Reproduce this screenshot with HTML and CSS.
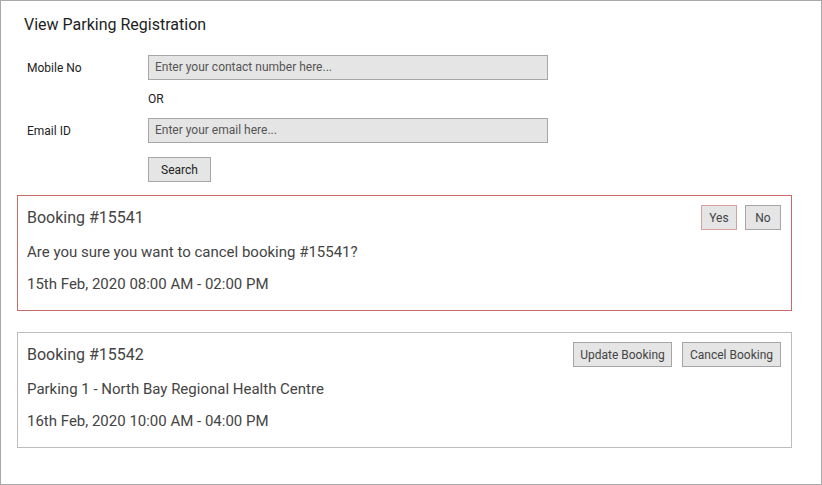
FILE: index.html
```html
<!DOCTYPE html>
<html>
<head>
<meta charset="utf-8">
<link rel="stylesheet" href="styles.css">
</head>
<body>
<div class="frame">
  <h1 class="title">View Parking Registration</h1>
  <div class="form">
    <label class="label">Mobile No</label>
    <div class="input">Enter your contact number here...</div>
    <span></span>
    <div class="or">OR</div>
    <label class="label">Email ID</label>
    <div class="input">Enter your email here...</div>
    <span></span>
    <div><button class="btn search">Search</button></div>
  </div>
  <div class="card card-alert">
    <div class="card-head">
      <div class="card-title">Booking #15541</div>
      <div class="actions actions-confirm">
        <button class="btn btn-sm btn-yes">Yes</button>
        <button class="btn btn-sm">No</button>
      </div>
    </div>
    <div class="line">Are you sure you want to cancel booking #15541?</div>
    <div class="line">15th Feb, 2020 08:00 AM - 02:00 PM</div>
  </div>
  <div class="card">
    <div class="card-head">
      <div class="card-title">Booking #15542</div>
      <div class="actions">
        <button class="btn btn-lg">Update Booking</button>
        <button class="btn btn-lg">Cancel Booking</button>
      </div>
    </div>
    <div class="line">Parking 1 - North Bay Regional Health Centre</div>
    <div class="line">16th Feb, 2020 10:00 AM - 04:00 PM</div>
  </div>
</div>
</body>
</html>
```
FILE: styles.css
```css
* { box-sizing: border-box; }
html, body { margin: 0; padding: 0; background: #fff; }
body { font-family: Roboto, "Noto Sans", sans-serif; color: #222; }
.frame {
  width: 822px;
  height: 485px;
  border: 1px solid #a9a9a9;
  padding: 0 29px 0 16px;
}
.title {
  margin: 0;
  padding: 14px 0 0 7px;
  font-size: 16px;
  font-weight: 400;
  line-height: 20px;
  color: #1e1e1e;
}
.form {
  display: grid;
  grid-template-columns: 121px 400px;
  align-items: center;
  row-gap: 8px;
  padding: 20px 0 0 10px;
  font-size: 12px;
}
.label { color: #222; }
.input {
  height: 25px;
  line-height: 23px;
  border: 1px solid #a6a6a6;
  background: #e5e5e5;
  padding: 0 6px;
  color: #555;
  font-size: 12px;
}
.or { line-height: 22px; color: #222; }
.btn {
  font-family: Roboto, "Noto Sans", sans-serif;
  font-size: 12px;
  color: #222;
  background: #e5e5e5;
  border: 1px solid #a6a6a6;
  height: 25px;
  padding: 0;
  margin: 0;
  cursor: pointer;
}
.search { width: 63px; margin-top: 6px; }
.card {
  border: 1px solid #bdbdbd;
  padding: 9px 10px 16px 9px;
  color: #444;
  margin-top: 21px;
}
.card-alert { border: 1px solid #c66a6a; margin-top: 13px; }
.card-head {
  display: flex;
  justify-content: space-between;
  align-items: center;
  height: 25px;
}
.card-title { font-size: 16px; line-height: 20px; padding-top: 1px; }
.actions { display: flex; gap: 10px; }
.actions-confirm { gap: 8px; }
.btn-sm { width: 36px; color: #444; }
.btn-lg { width: 99px; color: #444; }
.btn-yes { border-color: #d9a0a0; }
.line { font-size: 15px; line-height: 20px; margin-top: 12px; }
```
